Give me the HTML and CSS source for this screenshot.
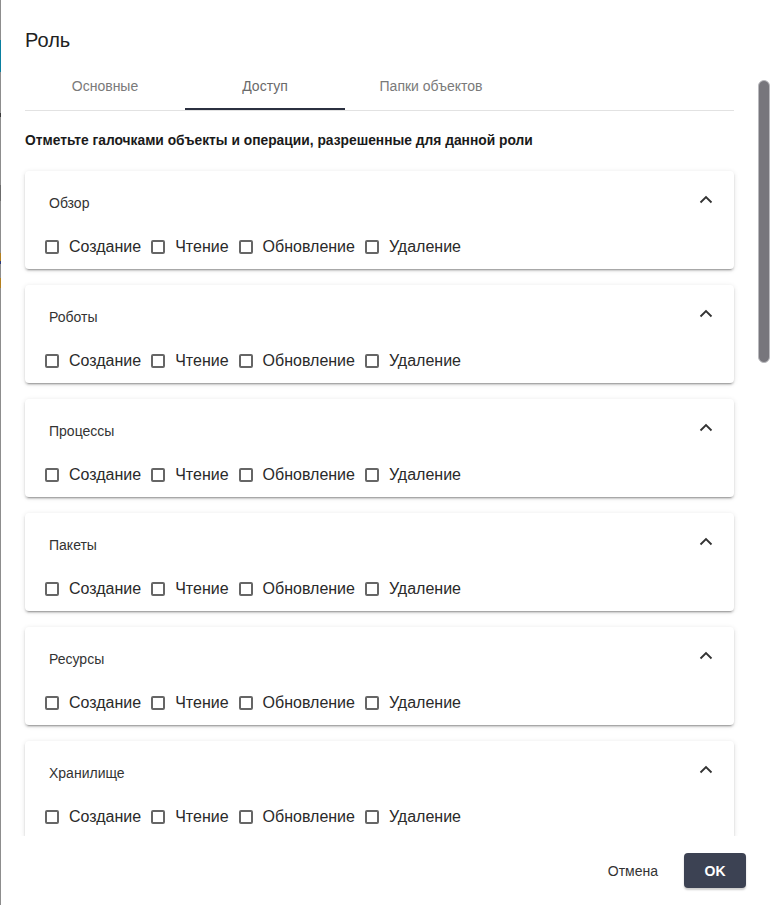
FILE: index.html
```html
<!DOCTYPE html>
<html lang="ru">
<head>
<meta charset="utf-8">
<title>Роль</title>
<link rel="stylesheet" href="styles.css">
</head>
<body>
<div class="strip">
  <span class="seg seg-gap1"></span>
  <span class="seg seg-teal"></span>
  <span class="seg seg-gap2"></span>
  <span class="seg seg-dark"></span>
  <span class="seg seg-gap3"></span>
  <span class="seg seg-mid"></span>
  <span class="seg seg-gap4"></span>
  <span class="seg seg-orange"></span>
  <span class="seg seg-blue"></span>
  <span class="seg seg-gap5"></span>
  <span class="seg seg-orange2"></span>
</div>
<div class="dialog">
  <h1 class="title">Роль</h1>
  <div class="viewport">
    <div class="content">
      <div class="tabs">
        <div class="tab">Основные</div>
        <div class="tab active">Доступ</div>
        <div class="tab tab-wide">Папки объектов</div>
      </div>
      <p class="hint">Отметьте галочками объекты и операции, разрешенные для данной роли</p>
      <div class="panels">
        <div class="panel"><div class="ph"><span class="pt">Обзор</span><svg class="chev" viewBox="0 0 24 24"><polyline points="6.5,14.5 12,9 17.5,14.5"/></svg></div><div class="pb"><label class="cb"><span class="box"></span>Создание</label><label class="cb"><span class="box"></span>Чтение</label><label class="cb"><span class="box"></span>Обновление</label><label class="cb"><span class="box"></span>Удаление</label></div></div>
        <div class="panel"><div class="ph"><span class="pt">Роботы</span><svg class="chev" viewBox="0 0 24 24"><polyline points="6.5,14.5 12,9 17.5,14.5"/></svg></div><div class="pb"><label class="cb"><span class="box"></span>Создание</label><label class="cb"><span class="box"></span>Чтение</label><label class="cb"><span class="box"></span>Обновление</label><label class="cb"><span class="box"></span>Удаление</label></div></div>
        <div class="panel"><div class="ph"><span class="pt">Процессы</span><svg class="chev" viewBox="0 0 24 24"><polyline points="6.5,14.5 12,9 17.5,14.5"/></svg></div><div class="pb"><label class="cb"><span class="box"></span>Создание</label><label class="cb"><span class="box"></span>Чтение</label><label class="cb"><span class="box"></span>Обновление</label><label class="cb"><span class="box"></span>Удаление</label></div></div>
        <div class="panel"><div class="ph"><span class="pt">Пакеты</span><svg class="chev" viewBox="0 0 24 24"><polyline points="6.5,14.5 12,9 17.5,14.5"/></svg></div><div class="pb"><label class="cb"><span class="box"></span>Создание</label><label class="cb"><span class="box"></span>Чтение</label><label class="cb"><span class="box"></span>Обновление</label><label class="cb"><span class="box"></span>Удаление</label></div></div>
        <div class="panel"><div class="ph"><span class="pt">Ресурсы</span><svg class="chev" viewBox="0 0 24 24"><polyline points="6.5,14.5 12,9 17.5,14.5"/></svg></div><div class="pb"><label class="cb"><span class="box"></span>Создание</label><label class="cb"><span class="box"></span>Чтение</label><label class="cb"><span class="box"></span>Обновление</label><label class="cb"><span class="box"></span>Удаление</label></div></div>
        <div class="panel"><div class="ph"><span class="pt">Хранилище</span><svg class="chev" viewBox="0 0 24 24"><polyline points="6.5,14.5 12,9 17.5,14.5"/></svg></div><div class="pb"><label class="cb"><span class="box"></span>Создание</label><label class="cb"><span class="box"></span>Чтение</label><label class="cb"><span class="box"></span>Обновление</label><label class="cb"><span class="box"></span>Удаление</label></div></div>
      </div>
    </div>
    <div class="scrollthumb"></div>
  </div>
  <div class="footer">
    <button class="btn btn-text">Отмена</button>
    <button class="btn btn-primary">OK</button>
  </div>
</div>
</body>
</html>
```

FILE: styles.css
```css
html, body {
  margin: 0;
  padding: 0;
  height: 905px;
  overflow: hidden;
}
body {
  display: flex;
  background: #8d8d8d;
  font-family: "Liberation Sans", Arial, sans-serif;
  color: #212121;
}
.strip {
  width: 1px;
  display: flex;
  flex-direction: column;
  flex-shrink: 0;
}
.seg { display: block; width: 1px; }
.seg-gap1 { height: 40px; }
.seg-teal { height: 32px; background: #0a7fa0; }
.seg-gap2 { height: 41px; }
.seg-dark { height: 4px; background: #3a3a3a; }
.seg-gap3 { height: 68px; }
.seg-mid { height: 16px; background: #6b6b6b; }
.seg-gap4 { height: 52px; }
.seg-orange { height: 8px; background: #b4801e; }
.seg-blue { height: 3px; background: #2c3a7a; }
.seg-gap5 { height: 14px; }
.seg-orange2 { height: 10px; background: #b4801e; }

.dialog {
  flex: 1;
  background: #fff;
  display: flex;
  flex-direction: column;
  min-width: 0;
}
.title {
  margin: 0 0 6px;
  padding: 24px 24px 0;
  height: 32px;
  line-height: 32px;
  font-size: 20px;
  font-weight: 400;
  color: #212121;
}
.viewport {
  flex: 1;
  min-height: 0;
  position: relative;
  display: flex;
}
.content {
  flex: 1;
  min-width: 0;
  overflow: hidden;
  padding: 0 36px 0 24px;
}
.scrollthumb {
  position: absolute;
  right: 0;
  top: 18px;
  width: 12px;
  height: 283px;
  box-sizing: border-box;
  background: #77767c;
  border: 1.5px solid #b9b9bd;
  border-radius: 6px;
}
.tabs {
  display: flex;
  height: 48px;
  border-bottom: 1px solid #e2e2e2;
}
.tab {
  width: 160px;
  display: flex;
  align-items: center;
  justify-content: center;
  font-size: 14px;
  color: #7a7a7a;
  box-sizing: border-box;
}
.tab-wide {
  padding-left: 12px;
}
.tab.active {
  color: #6a6a6a;
  border-bottom: 2px solid #2b3040;
  padding-top: 2px;
}
.hint {
  margin: 0;
  padding: 21px 0 21px;
  font-size: 13.8px;
  line-height: 18px;
  font-weight: 700;
  color: #1a1a1a;
}
.panels {
  display: flex;
  flex-direction: column;
  gap: 16px;
}
.panel {
  background: #fff;
  border-radius: 4px;
  box-shadow: 0 3px 1px -2px rgba(0,0,0,.2), 0 2px 2px 0 rgba(0,0,0,.14), 0 1px 5px 0 rgba(0,0,0,.12);
}
.ph {
  height: 64px;
  display: flex;
  align-items: center;
  justify-content: space-between;
  padding: 0 16px 0 24px;
}
.pt {
  font-size: 14px;
  color: #333;
}
.chev {
  width: 24px;
  height: 24px;
  fill: none;
  stroke: #333;
  stroke-width: 1.8;
  margin-bottom: 6px;
}
.pb {
  display: flex;
  align-items: center;
  gap: 10px;
  height: 22px;
  padding: 1px 20px 11px;
}
.cb {
  display: flex;
  align-items: center;
  gap: 10px;
  font-size: 16px;
  color: #2a2a2a;
}
.box {
  width: 14px;
  height: 14px;
  box-sizing: border-box;
  border: 2px solid #666;
  border-radius: 2px;
}
.footer {
  height: 69px;
  flex-shrink: 0;
  display: flex;
  align-items: flex-start;
  justify-content: flex-end;
  gap: 10px;
  padding: 17px 24px 0;
  box-sizing: border-box;
}
.btn {
  font-family: "Liberation Sans", Arial, sans-serif;
  height: 35px;
  border: none;
  border-radius: 4px;
  padding: 0 16px;
  font-size: 14px;
  cursor: pointer;
}
.btn-text {
  background: transparent;
  color: #333;
}
.btn-primary {
  min-width: 62px;
  background: #3c4253;
  color: #fff;
  font-size: 14px;
  font-weight: 700;
  box-shadow: 0 2px 2px rgba(0,0,0,.2);
}
```
